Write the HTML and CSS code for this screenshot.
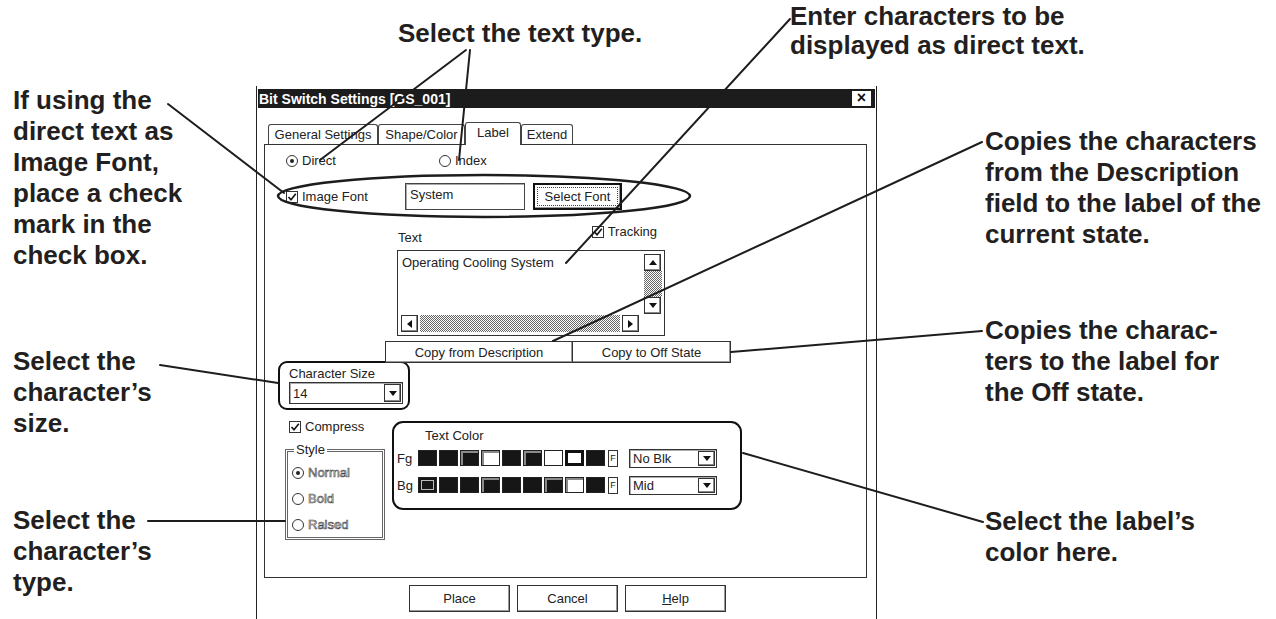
FILE: index.html
```html
<!DOCTYPE html>
<html lang="en">

<head>
  <meta charset="UTF-8">
  <meta name="viewport" content="width=device-width, initial-scale=1.0">
  <title>Bit Switch Settings - Label</title>
  <link rel="stylesheet" href="styles.css">
</head>

<body>
  <div class="figure">
    <div class="top-notes">
      <div></div>
      <p class="note note-texttype">Select the text type.</p>
      <p class="note note-enter">Enter characters to be<br>displayed as direct text.</p>
    </div>

    <div class="side side-left">
      <p class="note note-font">If using the<br>direct text as<br>Image Font,<br>place a check<br>mark in the<br>check box.</p>
      <p class="note note-size">Select the<br>character’s<br>size.</p>
      <p class="note note-type">Select the<br>character’s<br>type.</p>
    </div>

    <div class="dialog">
      <div class="titlebar">
        <span>Bit Switch Settings [GS_001]</span>
        <span class="close">×</span>
      </div>

      <div class="tabs">
        <div class="tab tab-general">General Settings</div>
        <div class="tab tab-shape">Shape/Color</div>
        <div class="tab tab-label active">Label</div>
        <div class="tab tab-extend">Extend</div>
      </div>

      <div class="panel">
        <div class="row-radios">
          <div class="opt"><span class="radio on"></span>Direct</div>
          <div class="opt"><span class="radio"></span>Index</div>
        </div>

        <div class="row-font">
          <div class="opt">
            <span class="check"><svg width="10" height="10" viewBox="0 0 10 10"><path d="M1.5 5 L4 7.8 L8.8 1.8" fill="none" stroke="#111" stroke-width="1.6"/></svg></span>Image Font
          </div>
          <div class="field">System</div>
          <div class="btn btn-default"><span>Select Font</span></div>
        </div>

        <div class="text-block">
          <div class="text-head">
            <span class="text-label">Text</span>
            <div class="opt tracking">
              <span class="check"><svg width="10" height="10" viewBox="0 0 10 10"><path d="M1.5 5 L4 7.8 L8.8 1.8" fill="none" stroke="#111" stroke-width="1.6"/></svg></span>Tracking
            </div>
          </div>
          <div class="textbox">
            <div class="textbox-value">Operating Cooling System</div>
            <div class="vscroll">
              <span class="arrow"><i class="tri tri-up"></i></span>
              <span class="track"></span>
              <span class="arrow"><i class="tri tri-down"></i></span>
            </div>
            <div class="hscroll">
              <span class="arrow"><i class="tri tri-left"></i></span>
              <span class="track"></span>
              <span class="arrow"><i class="tri tri-right"></i></span>
            </div>
            <div class="corner"></div>
          </div>
        </div>

        <div class="copy-row">
          <div class="btn btn-copy-desc">Copy from Description</div>
          <div class="btn btn-copy-off">Copy to Off State</div>
        </div>

        <div class="size-group">
          <div class="size-label">Character Size</div>
          <div class="select size-select"><span>14</span><span class="drop"><i class="tri tri-down"></i></span></div>
        </div>

        <div class="lower">
          <div class="lower-left">
            <div class="opt compress">
              <span class="check"><svg width="10" height="10" viewBox="0 0 10 10"><path d="M1.5 5 L4 7.8 L8.8 1.8" fill="none" stroke="#111" stroke-width="1.6"/></svg></span>Compress
            </div>
            <fieldset class="style-box">
              <legend>Style</legend>
              <div class="opt disabled"><span class="radio on"></span><span class="dim">Normal</span></div>
              <div class="opt disabled"><span class="radio"></span><span class="dim">Bold</span></div>
              <div class="opt disabled"><span class="radio"></span><span class="dim">Raised</span></div>
            </fieldset>
          </div>

          <div class="color-group">
            <div class="color-title">Text Color</div>
            <div class="color-row">
              <span class="color-label">Fg</span>
              <div class="swatches">
                <span class="sw k"></span>
                <span class="sw k"></span>
                <span class="sw k bevel"></span>
                <span class="sw w bevel"></span>
                <span class="sw k"></span>
                <span class="sw k bevel"></span>
                <span class="sw w"></span>
                <span class="sw w picked"></span>
                <span class="sw k"></span>
              </div>
              <span class="f-btn">F</span>
              <div class="select color-select"><span>No Blk</span><span class="drop"><i class="tri tri-down"></i></span></div>
            </div>
            <div class="color-row row-bg">
              <span class="color-label">Bg</span>
              <div class="swatches">
                <span class="sw k picked-dark"></span>
                <span class="sw k"></span>
                <span class="sw k"></span>
                <span class="sw k bevel"></span>
                <span class="sw k"></span>
                <span class="sw k"></span>
                <span class="sw k bevel"></span>
                <span class="sw w bevel"></span>
                <span class="sw k"></span>
              </div>
              <span class="f-btn">F</span>
              <div class="select color-select"><span>Mid</span><span class="drop"><i class="tri tri-down"></i></span></div>
            </div>
          </div>
        </div>
      </div>

      <div class="buttons">
        <div class="btn btn-foot">Place</div>
        <div class="btn btn-foot">Cancel</div>
        <div class="btn btn-foot"><u>H</u>elp</div>
      </div>
    </div>

    <div class="side side-right">
      <p class="note note-cur">Copies the characters<br>from the Description<br>field to the label of the<br>current state.</p>
      <p class="note note-off">Copies the charac-<br>ters to the label for<br>the Off state.</p>
      <p class="note note-color">Select the label’s<br>color here.</p>
    </div>

    <!-- leader lines -->
    <svg class="leaders" width="1276" height="619" viewBox="0 0 1276 619">
      <g fill="none" stroke="#1d1d1d" stroke-width="2" stroke-linecap="round">
        <line x1="466" y1="50" x2="320" y2="160" />
        <line x1="470" y1="50" x2="459" y2="160" />
        <line x1="790" y1="19" x2="566" y2="263" />
        <line x1="168" y1="104" x2="284" y2="193" />
        <line x1="982" y1="142" x2="553" y2="341" />
        <line x1="982" y1="331" x2="731" y2="352" />
        <line x1="160" y1="365" x2="278" y2="383" />
        <line x1="148" y1="521" x2="285" y2="521" />
        <line x1="983" y1="522" x2="743" y2="453" />
        <ellipse cx="484" cy="196" rx="206" ry="21" stroke-width="2.5" />
      </g>
    </svg>
  </div>
</body>

</html>
```

FILE: styles.css
```css
* {
  box-sizing: border-box;
}

body {
  margin: 0;
  background-color: #fff;
  font-family: "Liberation Sans", Arial, sans-serif;
  color: #231f20;
}

.figure {
  position: relative;
  width: 1276px;
  height: 619px;
  overflow: hidden;
  display: grid;
  grid-template-columns: 256px 621px 1fr;
  grid-template-rows: 85px 534px;
}

/* callout texts */
.note {
  margin: 0;
  font-weight: bold;
  font-size: 26px;
  line-height: 31px;
  white-space: nowrap;
}

.top-notes {
  grid-column: 1 / -1;
  display: grid;
  grid-template-columns: 398px 392px 1fr;
}

.note-texttype {
  margin-top: 18px;
}

.note-enter {
  margin-top: 2px;
  line-height: 29px;
}

.side-left {
  padding-left: 13px;
}

.note-size {
  margin-top: 75px;
}

.note-type {
  margin-top: 66px;
}

.side-right {
  padding-left: 108px;
}

.note-cur {
  margin-top: 41px;
}

.note-off {
  margin-top: 65px;
}

.note-color {
  margin-top: 98px;
}

.leaders {
  position: absolute;
  left: 0;
  top: 0;
  pointer-events: none;
  z-index: 5;
}

/* dialog */
.dialog {
  margin-top: 1px;
  border-left: 1px solid #222;
  border-right: 1px solid #222;
  padding: 3px 1px 0;
  font-size: 13px;
  color: #222;
}

.titlebar {
  height: 19px;
  background: #1c1c1c;
  color: #fff;
  display: flex;
  align-items: center;
  justify-content: space-between;
  padding: 0 4px 0 1px;
  font-weight: bold;
  font-size: 14px;
}

.close {
  width: 19px;
  height: 15px;
  background: #fff;
  color: #111;
  font-size: 16px;
  line-height: 14px;
  text-align: center;
}

.tabs {
  display: flex;
  align-items: flex-end;
  height: 23px;
  margin: 13px 0 0 10px;
  position: relative;
  z-index: 1;
}

.tab {
  height: 20px;
  border: 1px solid #444;
  border-bottom: none;
  border-radius: 3px 3px 0 0;
  line-height: 19px;
  text-align: center;
  background: #fff;
}

.tab-general {
  width: 110px;
}

.tab-shape {
  width: 87px;
}

.tab-label {
  width: 56px;
}

.tab-extend {
  width: 52px;
}

.tab.active {
  height: 23px;
  margin-bottom: -1px;
  line-height: 20px;
}

.panel {
  margin-left: 6px;
  width: 603px;
  height: 434px;
  border: 1px solid #333;
}

.opt {
  display: flex;
  align-items: center;
  gap: 4px;
  line-height: 16px;
}

.radio {
  position: relative;
  width: 12px;
  height: 12px;
  border: 1px solid #333;
  border-radius: 50%;
}

.radio.on::after {
  content: "";
  position: absolute;
  left: 3px;
  top: 3px;
  width: 4px;
  height: 4px;
  background: #222;
  border-radius: 50%;
}

.check {
  display: flex;
  align-items: center;
  justify-content: center;
  width: 12px;
  height: 12px;
  border: 1px solid #333;
}

.row-radios {
  display: grid;
  grid-template-columns: 153px auto;
  align-items: center;
  height: 16px;
  margin-top: 8px;
  padding-left: 21px;
}

.row-font {
  display: grid;
  grid-template-columns: 119px 120px 97px;
  align-items: center;
  height: 27px;
  margin-top: 14px;
  padding-left: 21px;
}

.field {
  height: 27px;
  border: 1px solid #444;
  box-shadow: inset 1px 1px 0 #aaa;
  padding: 3px 4px;
  line-height: 16px;
}

.btn {
  display: flex;
  align-items: center;
  justify-content: center;
  border: 1px solid #333;
  background: #fff;
  box-shadow: inset -1px -1px 0 #999;
}

.btn-default {
  height: 27px;
  margin-left: 8px;
  border: 2px solid #111;
  padding: 3px;
}

.btn-default span {
  flex: 1;
  height: 100%;
  display: flex;
  align-items: center;
  justify-content: center;
  outline: 1px dotted #444;
}

.text-block {
  width: 268px;
  margin: 14px 0 0 132px;
}

.text-head {
  display: flex;
  height: 22px;
}

.text-label {
  align-self: flex-end;
  line-height: 16px;
  padding-left: 1px;
}

.tracking {
  align-self: flex-start;
  margin-left: auto;
  margin-right: 8px;
}

.textbox {
  display: grid;
  grid-template-columns: 1fr 18px;
  grid-template-rows: 1fr 19px;
  height: 86px;
  margin-top: 4px;
  padding: 2px;
  border: 1px solid #333;
}

.textbox-value {
  padding: 2px 2px 0;
  line-height: 16px;
}

.vscroll {
  display: flex;
  flex-direction: column;
  padding-top: 1px;
}

.hscroll {
  display: flex;
  align-items: center;
  gap: 2px;
  padding: 0 5px 0 1px;
}

.arrow {
  display: flex;
  align-items: center;
  justify-content: center;
  width: 17px;
  height: 17px;
  border: 1px solid #333;
  box-shadow: inset -1px -1px 0 #888;
  flex-shrink: 0;
}

.track {
  flex: 1;
  background: repeating-conic-gradient(#666 0 25%, #fff 0 50%) 0 0 / 2px 2px;
}

.hscroll .track {
  height: 17px;
}

.tri {
  width: 0;
  height: 0;
  border: 4px solid transparent;
}

.tri-up {
  border-top-width: 0;
  border-bottom: 5px solid #111;
}

.tri-down {
  border-bottom-width: 0;
  border-top: 5px solid #111;
}

.tri-left {
  border-left-width: 0;
  border-right: 5px solid #111;
}

.tri-right {
  border-right-width: 0;
  border-left: 5px solid #111;
}

.copy-row {
  display: flex;
  height: 22px;
  margin: 5px 0 0 120px;
}

.btn-copy-desc {
  width: 188px;
}

.btn-copy-off {
  width: 159px;
  margin-left: -1px;
}

/* highlighted groups */
.size-group {
  width: 132px;
  height: 49px;
  margin: -2px 0 0 13px;
  padding: 3px 0 0 9px;
  border: 2px solid #111;
  border-radius: 9px;
}

.size-label {
  line-height: 15px;
}

.select {
  display: flex;
  align-items: center;
  border: 1px solid #333;
  box-shadow: inset 1px 1px 0 #aaa;
  padding-left: 3px;
  background: #fff;
}

.drop {
  display: flex;
  align-items: center;
  justify-content: center;
  width: 17px;
  height: calc(100% - 2px);
  margin: 0 1px 0 auto;
  border: 1px solid #333;
  box-shadow: inset -1px -1px 0 #888;
}

.size-select {
  width: 114px;
  height: 22px;
  margin-top: 1px;
}

.lower {
  display: flex;
  align-items: flex-start;
  margin: 11px 0 0 20px;
}

.lower-left {
  width: 100px;
}

.compress {
  height: 12px;
  padding-left: 4px;
}

.style-box {
  width: 100px;
  height: 97px;
  margin: 10px 0 0;
  padding: 8px 0 0 4px;
  border: 3px double #666;
  min-width: 0;
}

.style-box legend {
  padding: 0 2px;
  margin-left: 2px;
  line-height: 14px;
}

.style-box .opt + .opt {
  margin-top: 10px;
}

.dim {
  color: #f2f2f2;
  -webkit-text-stroke: 0.6px #444;
}

.color-group {
  width: 350px;
  height: 89px;
  margin-left: 7px;
  padding: 5px 0 0 3px;
  border: 2px solid #111;
  border-radius: 11px;
}

.color-title {
  padding-left: 28px;
  line-height: 15px;
}

.color-row {
  display: flex;
  align-items: center;
  height: 18px;
  margin-top: 6px;
}

.row-bg {
  margin-top: 9px;
}

.color-label {
  width: 21px;
}

.swatches {
  display: flex;
  gap: 2px;
}

.sw {
  width: 19px;
  height: 16px;
  border: 1px solid #222;
}

.sw.k {
  background: #161616;
}

.sw.w {
  background: #fff;
}

.sw.bevel {
  box-shadow: inset 2px 2px 0 #8a8a8a;
}

.sw.picked {
  border: 3px solid #111;
}

.sw.picked-dark {
  box-shadow: inset 0 0 0 2px #161616, inset 0 0 0 3px #bbb;
}

.f-btn {
  width: 10px;
  height: 17px;
  margin-left: 3px;
  border: 1px solid #333;
  font-size: 9px;
  line-height: 15px;
  text-align: center;
}

.color-select {
  width: 88px;
  height: 19px;
  margin-left: 11px;
}

.buttons {
  display: flex;
  justify-content: center;
  gap: 7px;
  margin-top: 7px;
  padding-left: 2px;
}

.btn-foot {
  width: 101px;
  height: 27px;
}
```
